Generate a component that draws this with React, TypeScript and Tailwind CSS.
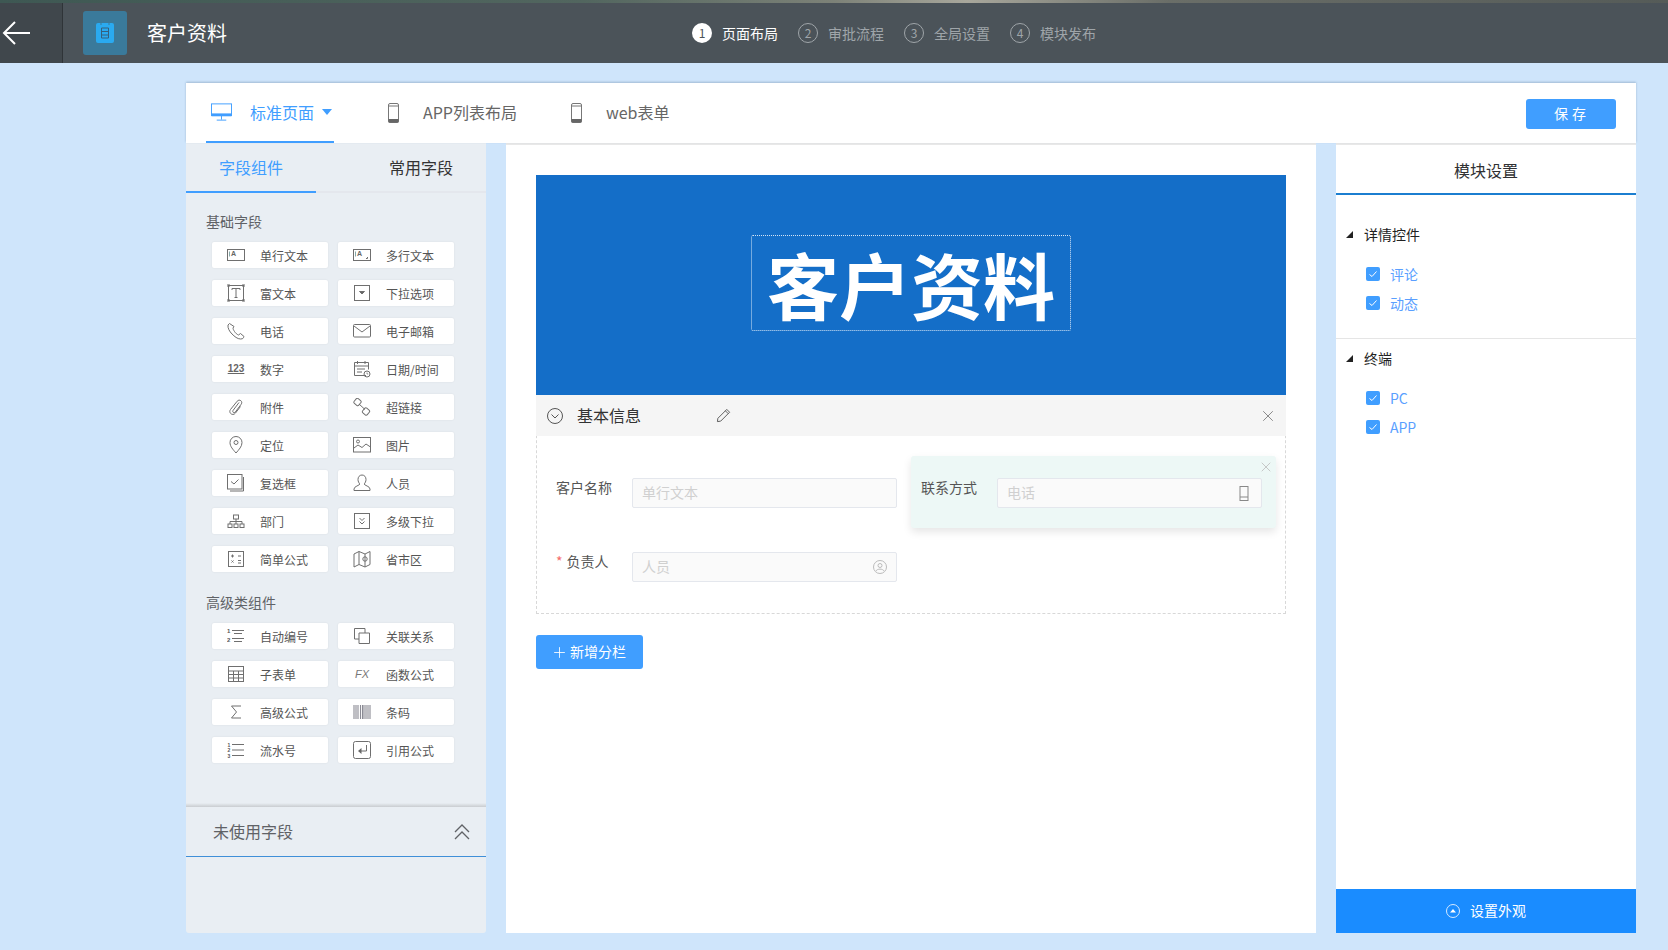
import React from 'react';
import { Plus, X } from 'lucide-react';

const Svg = ({ children, className = 'w-[18px] h-[18px]' }: { children: React.ReactNode; className?: string }) => (
  <svg viewBox="0 0 18 18" fill="none" stroke="#6f6f6f" strokeWidth="1" className={className}>
    {children}
  </svg>
);

const icons: Record<string, React.ReactNode> = {
  single: (
    <Svg>
      <rect x="0.500" y="3.500" width="17" height="11" />
      <path d="M2.500 5.500v5" stroke="#8aa" />
      <text x="4" y="10" fontSize="7" fill="#666" stroke="none" fontWeight="700" fontFamily="Liberation Sans">A</text>
    </Svg>
  ),
  multi: (
    <Svg>
      <rect x="0.500" y="3.500" width="17" height="11" />
      <path d="M2.500 5.500v5" stroke="#8aa" />
      <text x="4" y="10" fontSize="7" fill="#666" stroke="none" fontWeight="700" fontFamily="Liberation Sans">A</text>
      <path d="M14.500 11v1.500h-1.500" />
    </Svg>
  ),
  rich: (
    <Svg>
      <rect x="1.500" y="1.500" width="15" height="15" />
      <path d="M5 6V4.500h8V6M9 4.500v9M7.500 13.500h3" />
      <path d="M0.500 0.500h2v2h-2zM15.500 0.500h2v2h-2zM0.500 15.500h2v2h-2zM15.500 15.500h2v2h-2z" strokeWidth="0.600" />
    </Svg>
  ),
  select: (
    <Svg>
      <rect x="1.500" y="1.500" width="15" height="15" />
      <path d="M6.500 7.500h5L9 10z" fill="#666" />
    </Svg>
  ),
  phone: (
    <Svg>
      <path d="M2.500 1.500 1 3c-.5 3 1.500 6.500 4 9s5.500 5 8.500 5 3-1.500 3.500-2.500l-3.500-3-2 1.500c-1.500-.5-3-2-4-3.500s-1.500-2.500-1.500-3.500L7 4.500z" />
    </Svg>
  ),
  mail: (
    <Svg>
      <rect x="0.500" y="2.500" width="17" height="12.500" rx="1" />
      <path d="m1 4 8 6 8-6" />
    </Svg>
  ),
  number: <span className="text-[10px] leading-none font-['Liberation_Sans',sans-serif] font-bold text-[#666] underline">123</span>,
  date: (
    <Svg>
      <path d="M13 15.500H1.500v-13h14v7M4.500 1v3M12 1v3M1.500 6h14M4 9h8M4 12h5" />
      <circle cx="14" cy="14" r="3" />
      <path d="M14 12.500V14h1.200" strokeWidth="0.700" />
    </Svg>
  ),
  attach: (
    <Svg>
      <path d="M12 4.500 6 12.500c-1 1.500 1 3 2.200 1.700l6-8c2-2.700-1.700-5.700-4-3L3.500 11.500c-2.500 3.500 2.500 7 5 3.500l5-6.500" />
    </Svg>
  ),
  link: (
    <Svg>
      <rect x="1.500" y="1" width="6" height="6" rx="1.500" transform="rotate(40 4.500 4)" />
      <rect x="10" y="10.500" width="6" height="6" rx="1.500" transform="rotate(40 13 13.500)" />
      <path d="m6 6 6 5.500" />
    </Svg>
  ),
  location: (
    <Svg>
      <path d="M9 17C6 13.500 3 10.500 3 6.500a6 6 0 0 1 12 0c0 4-3 7-6 10.500z" />
      <circle cx="9" cy="6.500" r="2" />
    </Svg>
  ),
  image: (
    <Svg>
      <rect x="0.500" y="1.500" width="17" height="14.500" />
      <circle cx="5" cy="5.500" r="1.500" />
      <path d="m1 12 4-3 4 2.500 4-3.500 4.500 3" />
    </Svg>
  ),
  checkbox: (
    <Svg>
      <path d="M16.500 3v14H3" />
      <rect x="0.500" y="0.500" width="14.500" height="14.500" />
      <path d="m4 7.500 3 2.500 4.500-4.500" />
    </Svg>
  ),
  user: (
    <Svg>
      <path d="M9 1c-2.500 0-4 2-4 4.500 0 2 1 3.500 1.800 4.500 0 1.500-5.800 2.200-5.800 5v1.500h16V15c0-2.800-5.800-3.500-5.800-5 .8-1 1.800-2.500 1.800-4.500C13 3 11.500 1 9 1z" />
    </Svg>
  ),
  dept: (
    <Svg>
      <rect x="6.500" y="3" width="5" height="4" />
      <rect x="1" y="12" width="4" height="3.500" />
      <rect x="7" y="12" width="4" height="3.500" />
      <rect x="13" y="12" width="4" height="3.500" />
      <path d="M9 7v5M3 12V9.500h12V12" />
    </Svg>
  ),
  cascade: (
    <Svg>
      <rect x="1.500" y="1.500" width="15" height="15" />
      <path d="m6.500 6 2.500 2.500L11.500 6M6.500 9.500 9 12l2.500-2.500" />
    </Svg>
  ),
  formula: (
    <Svg>
      <rect x="1.500" y="1.500" width="15" height="15" />
      <path d="M4 6h3M5.500 4.500v3M11 6h3M4.500 10.500l2 2M6.500 10.500l-2 2M11 10.500h3M11 13h3" />
    </Svg>
  ),
  region: (
    <Svg>
      <path d="M1 4 6 1.500 12 4l5-2.500v13L12 17l-6-2.500L1 17zM6 1.500v13M12 4v13" />
      <circle cx="12" cy="9" r="2.200" />
    </Svg>
  ),
  autonum: (
    <Svg>
      <path d="M5 3.500h12M7 6.500h8M5 11.500h12M7 14.500h8" />
      <text x="0" y="6" fontSize="6" fill="#555" stroke="none" fontWeight="700" fontFamily="Liberation Sans">1</text>
      <text x="0" y="15" fontSize="6" fill="#555" stroke="none" fontWeight="700" fontFamily="Liberation Sans">2</text>
    </Svg>
  ),
  relation: (
    <Svg>
      <path d="M6 12H1.500V1.500H12V6" />
      <path d="M6 6h10.500v10.500H6z" />
    </Svg>
  ),
  subtable: (
    <Svg>
      <rect x="1.500" y="1.500" width="15" height="15" />
      <path d="M1.500 6h15M1.500 9.500h15M1.500 13h15M6.500 6v10.500M11.500 6v10.500" />
    </Svg>
  ),
  fx: <span className="text-[11px] leading-none italic font-['Liberation_Sans',sans-serif] text-[#777]">FX</span>,
  sigma: (
    <Svg>
      <path d="M14 3H4.500L9.500 9l-5 6H14" />
    </Svg>
  ),
  barcode: (
    <Svg>
      <path d="M1 2v14M3 2v14M5 2v14M7.500 2v14M9.500 2v14M11 2v14M13 2v14M15 2v14M17 2v14" strokeWidth="1.100" stroke="#8a8a94" />
    </Svg>
  ),
  serial: (
    <Svg>
      <path d="M5 3.500h12M5 9h12M5 14.500h12" />
      <text x="0.500" y="5.500" fontSize="5" fill="#555" stroke="none" fontWeight="700" fontFamily="Liberation Sans">1</text>
      <text x="0.500" y="11" fontSize="5" fill="#555" stroke="none" fontWeight="700" fontFamily="Liberation Sans">2</text>
      <text x="0.500" y="16.500" fontSize="5" fill="#555" stroke="none" fontWeight="700" fontFamily="Liberation Sans">3</text>
    </Svg>
  ),
  quote: (
    <Svg>
      <rect x="0.500" y="0.500" width="17" height="17" rx="2" />
      <path d="M13.500 4v6H8" />
      <path d="M8.500 7v6L5 10z" fill="#666" stroke="none" />
    </Svg>
  ),
};

const basicFields = [
  ['单行文本', 'single'], ['多行文本', 'multi'],
  ['富文本', 'rich'], ['下拉选项', 'select'],
  ['电话', 'phone'], ['电子邮箱', 'mail'],
  ['数字', 'number'], ['日期/时间', 'date'],
  ['附件', 'attach'], ['超链接', 'link'],
  ['定位', 'location'], ['图片', 'image'],
  ['复选框', 'checkbox'], ['人员', 'user'],
  ['部门', 'dept'], ['多级下拉', 'cascade'],
  ['简单公式', 'formula'], ['省市区', 'region'],
];

const advancedFields = [
  ['自动编号', 'autonum'], ['关联关系', 'relation'],
  ['子表单', 'subtable'], ['函数公式', 'fx'],
  ['高级公式', 'sigma'], ['条码', 'barcode'],
  ['流水号', 'serial'], ['引用公式', 'quote'],
];

const steps = ['页面布局', '审批流程', '全局设置', '模块发布'];

const PhoneIcon = () => (
  <svg viewBox="0 0 11 20" className="w-[11px] h-[20px]" fill="none">
    <rect x="0.500" y="0.500" width="10" height="19" rx="1.500" stroke="#777" />
    <path d="M0.500 3h10" stroke="#777" />
    <rect x="0.500" y="16" width="10" height="3.500" fill="#666" />
  </svg>
);

const FieldGrid = ({ items }: { items: string[][] }) => (
  <div className="grid grid-cols-[116px_116px] gap-x-[10px] gap-y-[12px] pl-[26px]">
    {items.map(([label, icon]) => (
      <div key={label} className="h-[26px] bg-white rounded-[2px] shadow-[0_0_2px_rgba(0,0,0,0.08)] flex items-center text-xs text-[#555]">
        <div className="w-[18px] ml-[15px] h-[18px] flex items-center justify-center">{icons[icon]}</div>
        <span className="ml-[15px] pt-[2px]">{label}</span>
      </div>
    ))}
  </div>
);

const Check = ({ label }: { label: string }) => (
  <div className="flex items-center h-[29px] pl-[30px]">
    <div className="w-[14px] h-[14px] rounded-[2px] bg-[#409eff] flex items-center justify-center">
      <svg viewBox="0 0 14 14" className="w-[14px] h-[14px]" fill="none" stroke="#fff" strokeWidth="1">
        <path d="m3.500 7.500 2.500 2 4.500-5" />
      </svg>
    </div>
    <span className="ml-[10px] text-sm text-[#5a9fff]">{label}</span>
  </div>
);

const Corner = () => <div className="w-0 h-0 border-l-[7px] border-l-transparent border-b-[7px] border-b-[#222]" />;

const Input = ({ text, icon }: { text: string; icon?: React.ReactNode }) => (
  <div className="w-[265px] h-[30px] bg-[#fafafa] border border-[#e4e7ed] rounded-[2px] flex items-center justify-between px-[9px] text-sm text-[#d0d0d0]">
    <span className="pb-[2px]">{text}</span>
    {icon}
  </div>
);

export default function App() {
  return (
    <div className="w-[1668px] h-[950px] overflow-hidden bg-[#cfe5fb] font-['Noto_Sans_CJK_SC','Liberation_Sans',sans-serif]">
      {/* Top bar */}
      <div className="h-[3px] bg-[linear-gradient(90deg,#3e5853_0%,#52665f_35%,#7d8278_50%,#a8a79c_58%,#6a6e68_70%,#555b58_100%)]" />
      <div className="h-[60px] bg-[#4b5359] flex items-center relative">
        <div className="w-[63px] h-full bg-[#40474c] border-r border-[#2f3438] flex items-center pl-[2px]">
          <svg viewBox="0 0 28 24" className="w-[28px] h-[24px]" fill="none" stroke="#fff" strokeWidth="2">
            <path d="M28 12H2M13 1 2 12l11 11" />
          </svg>
        </div>
        <div className="ml-5 w-[44px] h-[44px] rounded-[3px] bg-[#3a7a9b] flex items-center justify-center">
          <svg viewBox="0 0 20 22" className="w-[20px] h-[22px]">
            <rect x="1" y="1" width="18" height="20" rx="2" fill="#2aaaf0" />
            <path d="M6 0v3M14 0v3" stroke="#3a7a9b" strokeWidth="1" />
            <path d="M6.500 6h7v10h-7zM6.500 9.500h7M6.500 13h7" fill="none" stroke="#35607d" strokeWidth="1" />
          </svg>
        </div>
        <span className="ml-5 text-xl text-white">客户资料</span>
        <div className="absolute left-[692px] top-[20px] flex gap-[19px]">
          {steps.map((s, i) => (
            <div key={s} className={`flex items-center gap-[10px] text-sm ${i === 0 ? 'text-white' : 'text-[#9fa5a9]'}`}>
              <div className={`w-5 h-5 rounded-full flex items-center justify-center text-xs ${i === 0 ? 'bg-white text-[#4b5359]' : 'border border-[#9fa5a9]'}`}>
                {i + 1}
              </div>
              <span className="w-[57px] whitespace-nowrap">{s}</span>
            </div>
          ))}
        </div>
      </div>

      <div className="pl-[186px] pt-5 w-[1636px] box-content">
        {/* Toolbar */}
        <div className="w-[1450px] h-[60px] bg-white shadow-[0_-1px_2px_rgba(90,120,150,0.4)] flex items-start relative">
          <div className="ml-5 w-[128px] h-[60px] border-b-2 border-[#409eff] flex items-center text-base text-[#409eff]">
            <svg viewBox="0 0 22 18" className="ml-[5px] w-[21px] h-[18px]" fill="none" stroke="#409eff">
              <rect x="0.500" y="0.500" width="21" height="12" />
              <path d="M0.500 11h21v2h-21z" fill="#409eff" />
              <path d="M11 13v4M6 17.500h10" />
            </svg>
            <span className="ml-[18px] whitespace-nowrap">标准页面</span>
            <div className="ml-2 w-0 h-0 border-x-[5px] border-x-transparent border-t-[6px] border-t-[#409eff]" />
          </div>
          <div className="ml-[54px] h-[60px] flex items-center text-base text-[#666]">
            <PhoneIcon />
            <span className="ml-6 pb-[2px]">APP列表布局</span>
          </div>
          <div className="ml-[54px] h-[60px] flex items-center text-base text-[#666]">
            <PhoneIcon />
            <span className="ml-6 pb-[2px]">web表单</span>
          </div>
          <button className="absolute right-5 top-4 w-[90px] h-[30px] pb-[2px] pl-[2px] bg-[#409eff] rounded-[3px] text-white text-sm tracking-[4px]">
            保存
          </button>
        </div>

        <div className="flex gap-5 h-[790px]">
          {/* Field palette */}
          <div className="w-[300px] bg-[#e9eef3] rounded-b-[3px] flex flex-col">
            <div className="flex h-[50px] border-b-2 border-[#e4e7ed] text-base">
              <div className="w-[130px] h-[50px] border-b-2 border-[#409eff] text-[#409eff] flex items-center justify-center">字段组件</div>
              <div className="flex-1 flex items-center justify-center pl-[40px] text-[#333]">常用字段</div>
            </div>
            <div className="flex-1">
              <div className="pl-5 mt-[18px] mb-[11px] text-sm leading-5 text-[#606266]">基础字段</div>
              <FieldGrid items={basicFields} />
              <div className="pl-5 mt-5 mb-[11px] text-sm leading-5 text-[#606266]">高级类组件</div>
              <FieldGrid items={advancedFields} />
            </div>
            <div className="h-1 bg-[linear-gradient(180deg,transparent,#c9ccd0)]" />
            <div className="h-[50px] border-b border-[#3f8fd8] flex items-center justify-between pl-[27px] pr-4 text-base text-[#606266]">
              <span className="pb-[2px]">未使用字段</span>
              <svg viewBox="0 0 16 16" className="w-4 h-4" fill="none" stroke="#606266" strokeWidth="1.300">
                <path d="m1 8 7-7 7 7M1 15l7-7 7 7" />
              </svg>
            </div>
            <div className="h-[76px]" />
          </div>

          {/* Canvas */}
          <div className="w-[810px] bg-white border-t-2 border-[#e8e8e8] px-[30px] pt-[30px]">
            <div className="h-[220px] bg-[#146ec8] flex items-start justify-center pt-[60px]">
              <div className="w-[320px] h-[96px] border border-dotted border-[#d5e5f5] rounded-[2px] flex items-center justify-center text-[72px] leading-none font-bold text-white whitespace-nowrap">
                客户资料
              </div>
            </div>
            <div className="h-[219px] border border-t-0 border-dashed border-[#d8d8d8]">
              <div className="h-[41px] -mx-px bg-[#f5f5f5] flex items-center pl-[11px] pr-[9px] text-base text-[#333]">
                <svg viewBox="0 0 16 16" className="w-4 h-4" fill="none" stroke="#555">
                  <circle cx="8" cy="8" r="7.500" />
                  <path d="m4.500 6.500 3.500 3.500 3.500-3.500" />
                </svg>
                <span className="ml-[14px] pb-px">基本信息</span>
                <svg viewBox="0 0 16 16" className="ml-[75px] w-[15px] h-[15px]" fill="none" stroke="#555">
                  <path d="M11.500 1.500 14.500 4.500 5 14 1.500 14.500 2 11zM10 3l3 3" />
                </svg>
                <X className="ml-auto w-[18px] h-[18px] text-[#666]" strokeWidth={1} />
              </div>
              <div className="flex pl-[19px] pt-5">
                <div className="flex items-start pt-[22px]">
                  <span className="w-[76px] -mt-px text-sm leading-5 text-[#555]">客户名称</span>
                  <Input text="单行文本" />
                </div>
                <div className="ml-[14px] w-[365px] h-[72px] bg-[#edf8f6] rounded-[3px] shadow-[0_4px_8px_rgba(0,0,0,0.1)] relative flex items-start pl-[10px] pt-[22px]">
                  <X className="absolute right-[2px] top-[3px] w-4 h-4 text-[#bbb]" strokeWidth={1.200} />
                  <span className="w-[76px] -mt-px text-sm leading-5 text-[#555]">联系方式</span>
                  <Input
                    text="电话"
                    icon={
                      <svg viewBox="0 0 10 15" className="w-[10px] h-[15px] mr-[3px]" fill="none" stroke="#888">
                        <rect x="1" y="0.500" width="8" height="14" />
                        <path d="M1 11h8" />
                      </svg>
                    }
                  />
                </div>
              </div>
              <div className="flex items-start pl-[19px] pt-6">
                <span className="w-[76px] -mt-px text-sm leading-5 text-[#555]"><span className="text-[#f56c6c] mr-1">*</span>负责人</span>
                <Input
                  text="人员"
                  icon={
                    <svg viewBox="0 0 14 14" className="w-[14px] h-[14px]" fill="none" stroke="#bbb">
                      <circle cx="7" cy="7" r="6.500" />
                      <circle cx="7" cy="5.500" r="2" />
                      <path d="M3 11c1-2.500 7-2.500 8 0" />
                    </svg>
                  }
                />
              </div>
            </div>
            <button className="mt-[21px] w-[107px] h-[34px] bg-[#409eff] rounded-[3px] text-white text-sm flex items-center pl-[15px]">
              <Plus className="w-[17px] h-[17px]" strokeWidth={1.200} />
              <span className="ml-[2px] pb-[2px]">新增分栏</span>
            </button>
          </div>

          {/* Module settings */}
          <div className="w-[300px] bg-white border-t-2 border-[#e8e8e8] flex flex-col">
            <div className="h-[50px] pt-px border-b-2 border-[#1b7ed0] flex items-center justify-center text-base text-[#303133]">模块设置</div>
            <div className="flex-1">
              <div className="flex items-center gap-[11px] pl-[10px] mt-[29px] text-sm text-[#222]"><Corner />详情控件</div>
              <div className="mt-[15px]">
                <Check label="评论" />
                <Check label="动态" />
              </div>
              <div className="border-t border-[#e5e5e5] mt-[21px] pt-[9px]">
                <div className="flex items-center gap-[11px] pl-[10px] text-sm text-[#222]"><Corner />终端</div>
                <div className="mt-[15px]">
                  <Check label="PC" />
                  <Check label="APP" />
                </div>
              </div>
            </div>
            <div className="h-[44px] bg-[#1a8cff] flex items-center justify-center text-sm text-white">
              <svg viewBox="0 0 14 14" className="w-[14px] h-[14px]" fill="none" stroke="#d5e9ff">
                <circle cx="7" cy="7" r="6.500" />
                <path d="M4 8.500h6L7 5z" fill="#fff" stroke="none" />
              </svg>
              <span className="ml-[10px] pb-[3px]">设置外观</span>
            </div>
          </div>
        </div>
      </div>
    </div>
  );
}
